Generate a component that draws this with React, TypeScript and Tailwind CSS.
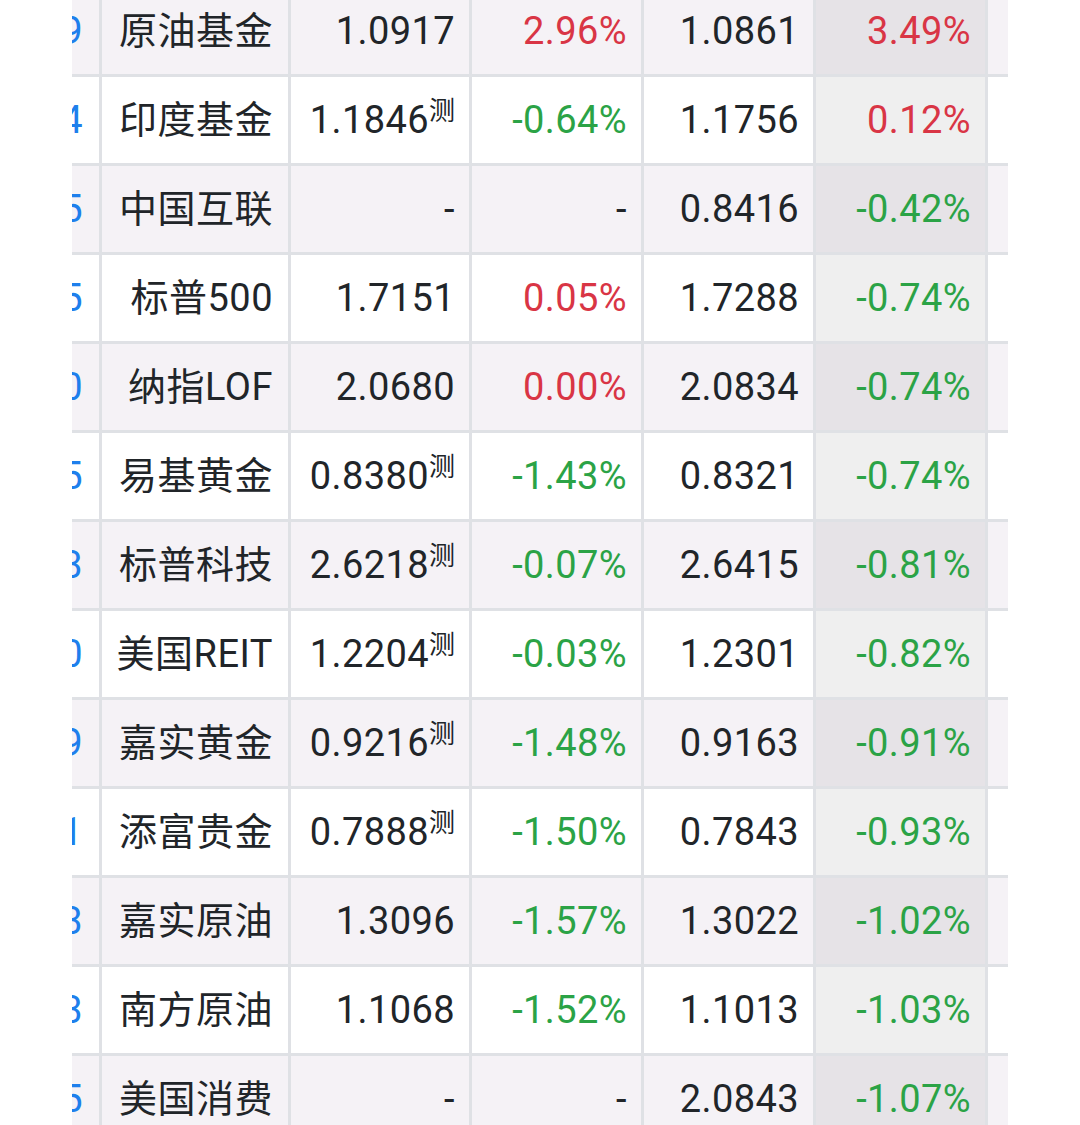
import React from "react";

type Row = {
  idx: string;
  name: string;
  v1: string;
  est?: boolean;
  p1: string;
  v2: string;
  p2: string;
};

const rows: Row[] = [
  { idx: "19", name: "原油基金", v1: "1.0917", p1: "2.96%", v2: "1.0861", p2: "3.49%" },
  { idx: "14", name: "印度基金", v1: "1.1846", est: true, p1: "-0.64%", v2: "1.1756", p2: "0.12%" },
  { idx: "15", name: "中国互联", v1: "-", p1: "-", v2: "0.8416", p2: "-0.42%" },
  { idx: "15", name: "标普500", v1: "1.7151", p1: "0.05%", v2: "1.7288", p2: "-0.74%" },
  { idx: "10", name: "纳指LOF", v1: "2.0680", p1: "0.00%", v2: "2.0834", p2: "-0.74%" },
  { idx: "15", name: "易基黄金", v1: "0.8380", est: true, p1: "-1.43%", v2: "0.8321", p2: "-0.74%" },
  { idx: "13", name: "标普科技", v1: "2.6218", est: true, p1: "-0.07%", v2: "2.6415", p2: "-0.81%" },
  { idx: "10", name: "美国REIT", v1: "1.2204", est: true, p1: "-0.03%", v2: "1.2301", p2: "-0.82%" },
  { idx: "19", name: "嘉实黄金", v1: "0.9216", est: true, p1: "-1.48%", v2: "0.9163", p2: "-0.91%" },
  { idx: "11", name: "添富贵金", v1: "0.7888", est: true, p1: "-1.50%", v2: "0.7843", p2: "-0.93%" },
  { idx: "13", name: "嘉实原油", v1: "1.3096", p1: "-1.57%", v2: "1.3022", p2: "-1.02%" },
  { idx: "13", name: "南方原油", v1: "1.1068", p1: "-1.52%", v2: "1.1013", p2: "-1.03%" },
  { idx: "15", name: "美国消费", v1: "-", p1: "-", v2: "2.0843", p2: "-1.07%" },
];

function pctClass(p: string) {
  if (p === "-") return "text-[#212529]";
  return p.startsWith("-") ? "text-[#2ba346]" : "text-[#d93545]";
}

export default function App() {
  return (
    <div
      className="w-[1080px] h-[1125px] overflow-hidden bg-white"
      style={{ fontFamily: "Roboto, 'Noto Sans CJK SC', sans-serif" }}
    >
      <div className="ml-[72px] w-[936px] mt-[-12px] text-[38px] leading-none">
        {rows.map((r, i) => {
          const striped = i % 2 === 0;
          const rowBg = striped ? "bg-[#f5f2f6]" : "bg-white";
          const hiBg = striped ? "bg-[#e6e3e7]" : "bg-[#efefef]";
          return (
            <div
              key={i}
              className={`flex h-[89px] border-b-[3px] border-[#dfe1e5] ${rowBg}`}
            >
              <div className="w-[30px] shrink-0 border-r-[3px] border-[#dfe1e5] overflow-hidden flex items-center justify-end pr-[16px]">
                <span className="text-[#1e7fec] whitespace-nowrap tracking-[0.4px]">{r.idx}</span>
              </div>
              <div className="w-[189px] shrink-0 border-r-[3px] border-[#dfe1e5] flex items-center justify-end pr-[15px] text-[#212529] whitespace-nowrap tracking-[0.5px]">
                {r.name}
              </div>
              <div className="w-[181px] shrink-0 border-r-[3px] border-[#dfe1e5] flex items-center justify-end pr-[14px] text-[#212529] whitespace-nowrap tracking-[0.4px]">
                <span>
                  {r.v1}
                  {r.est && (
                    <span className="text-[26px] relative top-[-13px] tracking-normal">测</span>
                  )}
                </span>
              </div>
              <div
                className={`w-[172px] shrink-0 border-r-[3px] border-[#dfe1e5] flex items-center justify-end pr-[14px] whitespace-nowrap tracking-[0.4px] ${pctClass(r.p1)}`}
              >
                {r.p1}
              </div>
              <div className="w-[172px] shrink-0 border-r-[3px] border-[#dfe1e5] flex items-center justify-end pr-[14px] text-[#212529] whitespace-nowrap tracking-[0.4px]">
                {r.v2}
              </div>
              <div
                className={`w-[172px] shrink-0 border-r-[3px] border-[#dfe1e5] flex items-center justify-end pr-[14px] whitespace-nowrap tracking-[0.4px] ${hiBg} ${pctClass(r.p2)}`}
              >
                {r.p2}
              </div>
              <div className="w-[20px] shrink-0" />
            </div>
          );
        })}
      </div>
    </div>
  );
}
